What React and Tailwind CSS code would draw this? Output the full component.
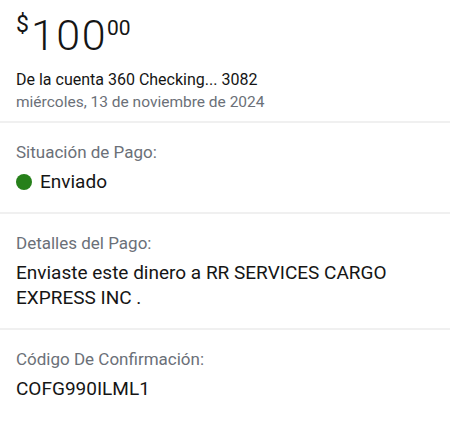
const SECTIONS = [
  { label: 'Situación de Pago:', status: 'Enviado' },
  { label: 'Detalles del Pago:', value: 'Enviaste este dinero a RR SERVICES CARGO EXPRESS INC .' },
  { label: 'Código De Confirmación:', value: 'COFG990ILML1' },
]

function Section({ label, value, status, last }) {
  return (
    <div className={`px-4 pt-[18px] pb-[18px] ${last ? '' : 'border-b-2 border-[#f0f0f0]'}`}>
      <p className="text-[17px] leading-[22px] text-[#6b7078]">{label}</p>
      {status ? (
        <div className="mt-[6px] flex items-center gap-[8px]">
          <span className="inline-block h-[16px] w-[16px] rounded-full bg-[#26801a]" />
          <span className="text-[19px] leading-[25px] text-[#151515]">{status}</span>
        </div>
      ) : (
        <p className="mt-[6px] text-[19px] leading-[25px] text-[#151515] pr-6">{value}</p>
      )}
    </div>
  )
}

export default function App() {
  return (
    <div className="w-[450px] h-[430px] bg-white overflow-hidden font-['Roboto',sans-serif]">
      <div className="px-4 pt-[14px] pb-[7px] border-b-2 border-[#f0f0f0]">
        <div className="flex items-start text-[#151515]">
          <span className="text-[23px] leading-none mt-[-1px]">$</span>
          <span className="ml-[2px] text-[43px] leading-none tracking-[1.5px] font-light">100</span>
          <span className="text-[21px] leading-none mt-[4px]">00</span>
        </div>
        <p className="mt-[11px] text-[16px] leading-[23px] text-[#151515]">De la cuenta 360 Checking... 3082</p>
        <p className="text-[15.5px] leading-[23px] text-[#6b7078]">miércoles, 13 de noviembre de 2024</p>
      </div>
      {SECTIONS.map((s, i) => (
        <Section key={s.label} {...s} last={i === SECTIONS.length - 1} />
      ))}
    </div>
  )
}
